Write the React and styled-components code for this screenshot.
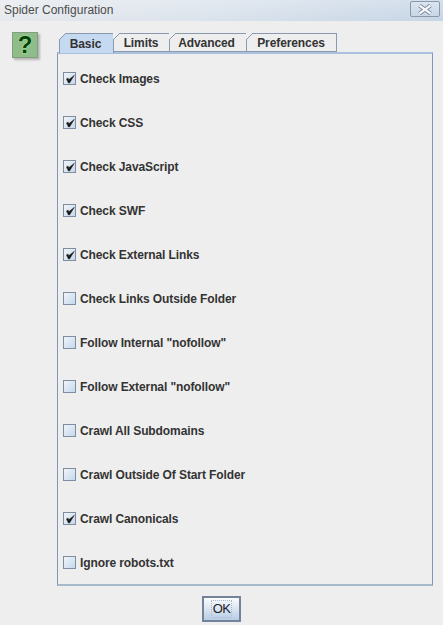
import React from "react";
import styled, { createGlobalStyle } from "styled-components";

const GlobalStyle = createGlobalStyle`
  html, body {
    margin: 0;
    padding: 0;
    background: #eeeeee;
  }
  body {
    font-family: "Liberation Sans", Arial, sans-serif;
  }
`;

const Window = styled.div`
  width: 443px;
  height: 625px;
  display: flex;
  flex-direction: column;
  overflow: hidden;
  background: #eeeeee;
`;

const TitleBar = styled.div`
  height: 21px;
  display: flex;
  align-items: flex-start;
  justify-content: space-between;
  padding: 1px 3px 0 4px;
  box-sizing: border-box;
  background:
    linear-gradient(rgba(255, 255, 255, 0.25), rgba(255, 255, 255, 0)),
    linear-gradient(to right, #e6e9ed 0%, #dbe3ec 45%, #c6d5e6 100%);
`;

const Title = styled.span`
  font-size: 12px;
  line-height: 18px;
  color: #4c4c4c;
`;

const CloseButton = styled.div`
  width: 30px;
  height: 16px;
  display: flex;
  align-items: center;
  justify-content: center;
  box-sizing: border-box;
  border: 1px solid #8a98a8;
  border-radius: 2px;
  background: linear-gradient(#dbe5f0, #c9d7e6);
`;

const Body = styled.div`
  display: flex;
  padding: 11px 10px 0 12px;
`;

const HelpIcon = styled.div`
  width: 26px;
  height: 26px;
  flex: none;
  display: flex;
  align-items: center;
  justify-content: center;
  margin-right: 19px;
  box-sizing: border-box;
  border: 1px solid #7f9f7f;
  background: #90bc8a;
  box-shadow: 2px 2px 2px #b5b5b5;
  font-size: 24px;
  font-weight: bold;
  color: #083f08;
  text-shadow: 0 0 1px #a4ffa4, 0 0 2px #a4ffa4;
`;

const Main = styled.div`
  display: flex;
  flex-direction: column;
  width: 376px;
`;

const TabRow = styled.div`
  display: flex;
  height: 20px;
  box-sizing: border-box;
  padding: 1px 0 0 2px;
  position: relative;
  z-index: 1;
`;

const Tab = styled.div`
  position: relative;
  width: ${(p) => p.$width}px;
  height: ${(p) => (p.$active ? 20 : 19)}px;
  box-sizing: border-box;
  display: flex;
  align-items: center;
  justify-content: center;
  padding: 1px ${(p) => p.$shift}px 0 0;
  margin-right: -1px;
  border: 1px solid #8a9aae;
  border-bottom: ${(p) => (p.$active ? "none" : "1px solid #8a9aae")};
  background: ${(p) => (p.$active ? "#c5daf0" : "#eeeeee")};
  font-size: 12px;
  font-weight: bold;
  letter-spacing: -0.1px;
  color: #333;

  /* cut top-left corner of the tab */
  &::before {
    content: "";
    position: absolute;
    left: -1px;
    top: -1px;
    width: 7px;
    height: 7px;
    background: linear-gradient(
      135deg,
      #eeeeee 44%,
      #8a9aae 44%,
      #8a9aae 56%,
      transparent 56%
    );
  }
`;

const Panel = styled.div`
  height: 534px;
  box-sizing: border-box;
  display: flex;
  flex-direction: column;
  padding: 3px 0 0 5px;
  border: 1px solid #8097b8;
  border-top: 2px solid #a9c0de;
  border-bottom: 2px solid #a9bacd;
`;

const Row = styled.label`
  height: 44px;
  flex: none;
  display: flex;
  align-items: center;
  gap: 4px;
  font-size: 12px;
  font-weight: bold;
  letter-spacing: -0.1px;
  color: #333;
`;

const Box = styled.span`
  width: 13px;
  height: 13px;
  flex: none;
  margin-top: -1px;
  display: flex;
  align-items: center;
  justify-content: center;
  box-sizing: border-box;
  border: 1px solid #7d8ea3;
  background: linear-gradient(135deg, #f0f4f9, #c6d8ec);
`;

const Footer = styled.div`
  display: flex;
  justify-content: center;
  padding-top: 10px;
`;

const OkButton = styled.button`
  width: 39px;
  height: 26px;
  padding: 0;
  box-sizing: border-box;
  display: flex;
  align-items: center;
  justify-content: center;
  border: 2px solid #74829c;
  background: linear-gradient(#fbfcfe, #b8cde5);
  font-family: inherit;
  font-size: 13px;
  letter-spacing: -0.7px;
  color: #222;
`;

const OkLabel = styled.span`
  border: 1px dotted #a9bad0;
  padding: 0 1px;
  line-height: 16px;
`;

const tabs = [
  { label: "Basic", width: 55, active: true, shift: 2 },
  { label: "Limits", width: 57, shift: 1 },
  { label: "Advanced", width: 78, shift: 3 },
  { label: "Preferences", width: 91, shift: 1 },
];

const options = [
  { label: "Check Images", checked: true },
  { label: "Check CSS", checked: true },
  { label: "Check JavaScript", checked: true },
  { label: "Check SWF", checked: true },
  { label: "Check External Links", checked: true },
  { label: "Check Links Outside Folder" },
  { label: 'Follow Internal "nofollow"' },
  { label: 'Follow External "nofollow"' },
  { label: "Crawl All Subdomains" },
  { label: "Crawl Outside Of Start Folder" },
  { label: "Crawl Canonicals", checked: true },
  { label: "Ignore robots.txt" },
];

function CheckMark() {
  return (
    <svg width="10" height="10" viewBox="0 0 10 10">
      <path d="M1.4 5 L3.4 9 L4.6 9 L9.4 1.2 L3.9 5.6 L2.9 4 Z" fill="#1c1c1c" stroke="#1c1c1c" strokeWidth="0.4" />
    </svg>
  );
}

function CloseIcon() {
  return (
    <svg width="16" height="11" viewBox="0 0 16 11">
      <path d="M2.5 1.5 L13.5 9.5 M13.5 1.5 L2.5 9.5" stroke="#66768a" strokeWidth="4" />
      <path d="M2.5 1.5 L13.5 9.5 M13.5 1.5 L2.5 9.5" stroke="#f6f8fb" strokeWidth="2.2" />
    </svg>
  );
}

function App() {
  return (
    <Window>
      <GlobalStyle />
      <TitleBar>
        <Title>Spider Configuration</Title>
        <CloseButton>
          <CloseIcon />
        </CloseButton>
      </TitleBar>
      <Body>
        <HelpIcon>?</HelpIcon>
        <Main>
          <TabRow>
            {tabs.map((tab) => (
              <Tab key={tab.label} $width={tab.width} $active={tab.active} $shift={tab.shift}>
                {tab.label}
              </Tab>
            ))}
          </TabRow>
          <Panel>
            {options.map((option) => (
              <Row key={option.label}>
                <Box>{option.checked && <CheckMark />}</Box>
                {option.label}
              </Row>
            ))}
          </Panel>
        </Main>
      </Body>
      <Footer>
        <OkButton>
          <OkLabel>OK</OkLabel>
        </OkButton>
      </Footer>
    </Window>
  );
}

export default App;
